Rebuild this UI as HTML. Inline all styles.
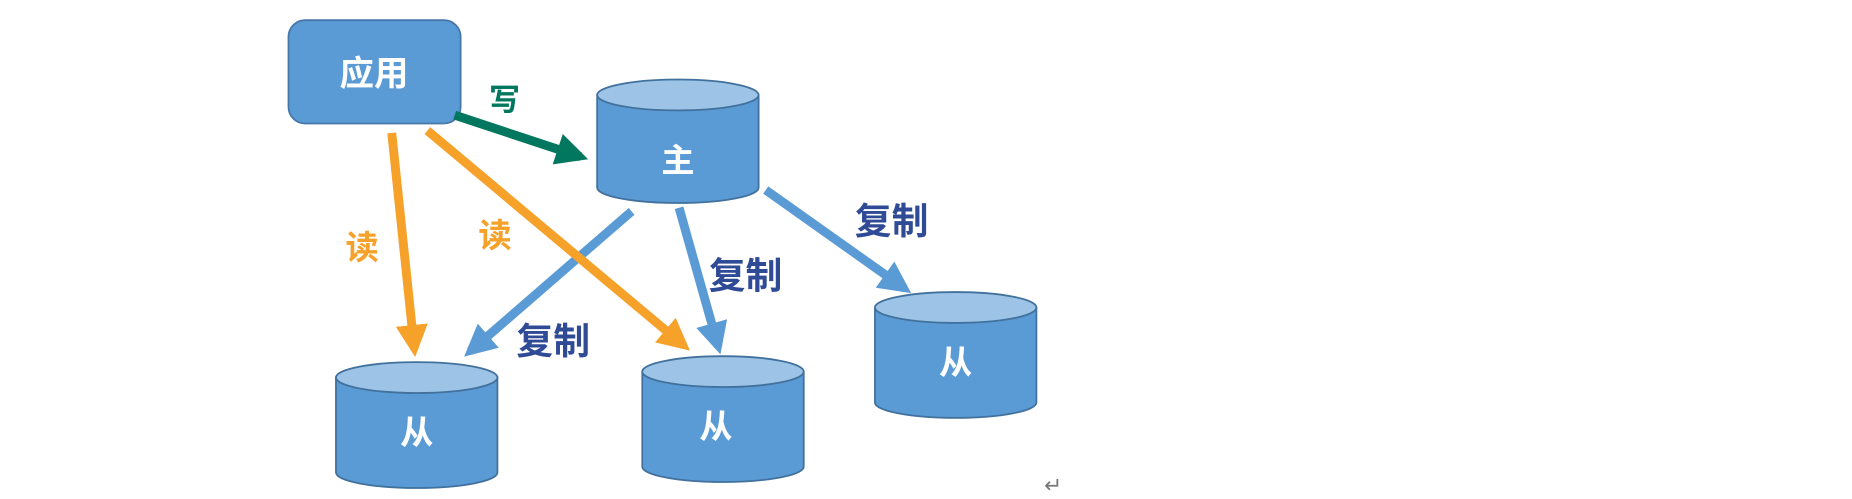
<!DOCTYPE html>
<html><head><meta charset="utf-8"><style>
html,body{margin:0;padding:0;background:#fff;width:1852px;height:499px;overflow:hidden}
svg{display:block}
text{font-family:"Liberation Sans","Noto Sans CJK SC",sans-serif}
</style></head><body>
<svg width="1852" height="499" viewBox="0 0 1560 420.3" preserveAspectRatio="none">
<defs>
<marker id="mo" markerWidth="3.6" markerHeight="3.6" refX="2.7" refY="1.8" orient="auto" markerUnits="strokeWidth"><path d="M0,0 L3.6,1.8 L0,3.6 z" fill="#f5a12a"/></marker>
<marker id="mb" markerWidth="3.6" markerHeight="3.6" refX="2.7" refY="1.8" orient="auto" markerUnits="strokeWidth"><path d="M0,0 L3.6,1.8 L0,3.6 z" fill="#5b9bd5"/></marker>
<marker id="mg" markerWidth="3.6" markerHeight="3.6" refX="2.7" refY="1.8" orient="auto" markerUnits="strokeWidth"><path d="M0,0 L3.6,1.8 L0,3.6 z" fill="#00775e"/></marker>
</defs>
<rect x="243" y="17" width="145" height="87" rx="14" fill="#5b9bd5" stroke="#4677a8" stroke-width="1.5"/>
<text x="315" y="72" font-size="29" font-weight="bold" fill="#fff" text-anchor="middle">应用</text>
<g stroke="#41719c" stroke-width="1.5">
<path d="M503,80 L503,158 A68,13 0 0 0 639,158 L639,80 Z" fill="#5b9bd5"/>
<ellipse cx="571" cy="80" rx="68" ry="13" fill="#9dc3e6"/>
<path d="M283,318 L283,398 A68,13 0 0 0 419,398 L419,318 Z" fill="#5b9bd5"/>
<ellipse cx="351" cy="318" rx="68" ry="13" fill="#9dc3e6"/>
<path d="M541,313 L541,393 A68,13 0 0 0 677,393 L677,313 Z" fill="#5b9bd5"/>
<ellipse cx="609" cy="313" rx="68" ry="13" fill="#9dc3e6"/>
<path d="M737,259 L737,339 A68,13 0 0 0 873,339 L873,259 Z" fill="#5b9bd5"/>
<ellipse cx="805" cy="259" rx="68" ry="13" fill="#9dc3e6"/>
</g>
<text x="571" y="145" font-size="28" font-weight="bold" fill="#fff" text-anchor="middle">主</text>
<text x="351" y="374" font-size="28" font-weight="bold" fill="#fff" text-anchor="middle">从</text>
<text x="603" y="369" font-size="28" font-weight="bold" fill="#fff" text-anchor="middle">从</text>
<text x="805" y="315" font-size="28" font-weight="bold" fill="#fff" text-anchor="middle">从</text>
<line x1="383" y1="97" x2="489" y2="132" stroke="#00775e" stroke-width="7.5" marker-end="url(#mg)"/>
<line x1="330" y1="112" x2="349" y2="294" stroke="#f5a12a" stroke-width="7.5" marker-end="url(#mo)"/>
<line x1="532" y1="178" x2="396" y2="296" stroke="#5b9bd5" stroke-width="7.5" marker-end="url(#mb)"/>
<line x1="360" y1="110" x2="576" y2="291" stroke="#f5a12a" stroke-width="7.5" marker-end="url(#mo)"/>
<line x1="572" y1="175" x2="605" y2="292" stroke="#5b9bd5" stroke-width="7.5" marker-end="url(#mb)"/>
<line x1="645" y1="160" x2="762" y2="243" stroke="#5b9bd5" stroke-width="7.5" marker-end="url(#mb)"/>
<text x="425" y="93" font-size="26" font-weight="bold" fill="#00775e" text-anchor="middle">写</text>
<text x="305" y="218" font-size="28" font-weight="bold" fill="#f5a12a" text-anchor="middle">读</text>
<text x="417" y="208" font-size="28" font-weight="bold" fill="#f5a12a" text-anchor="middle">读</text>
<text x="751" y="197" font-size="31" font-weight="bold" fill="#2f4b96" text-anchor="middle">复制</text>
<text x="628" y="243" font-size="31" font-weight="bold" fill="#2f4b96" text-anchor="middle">复制</text>
<text x="466" y="298" font-size="31" font-weight="bold" fill="#2f4b96" text-anchor="middle">复制</text>
<text x="887" y="415" font-size="18" fill="#777" text-anchor="middle">↵</text>
</svg>
</body></html>
